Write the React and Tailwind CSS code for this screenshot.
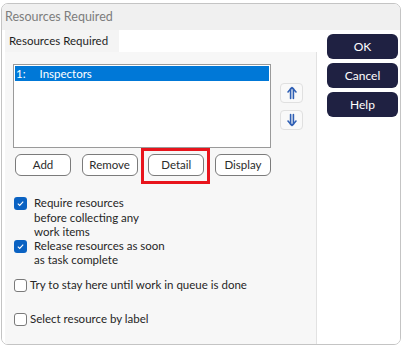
import React from 'react';

function ArrowIcon({ down }) {
  return (
    <svg width="12" height="14" viewBox="0 0 12 14" fill="none" stroke="#2f5fb4" strokeWidth="1.6" strokeLinecap="round" strokeLinejoin="round">
      {down ? (
        <>
          <path d="M2 8 L6 12.5 L10 8" />
          <path d="M4.6 1.5 V11.5 M7.4 1.5 V11.5" />
        </>
      ) : (
        <>
          <path d="M2 6 L6 1.5 L10 6" />
          <path d="M4.6 2.5 V12.5 M7.4 2.5 V12.5" />
        </>
      )}
    </svg>
  );
}

function Check({ checked, children, gap = 'gap-[6px]' }) {
  return (
    <div className={`flex items-start ${gap}`}>
      {checked ? (
        <div className="mt-[1px] w-[13px] h-[13px] shrink-0 rounded-[3px] bg-[#0a62c2] flex items-center justify-center">
          <svg width="9" height="9" viewBox="0 0 9 9" fill="none" stroke="white" strokeWidth="1.1">
            <path d="M1.8 4.6 L3.7 6.4 L7.2 2.6" />
          </svg>
        </div>
      ) : (
        <div className="mt-[1px] w-[13px] h-[13px] shrink-0 rounded-[3px] border border-[#7a7a7a] bg-white" />
      )}
      <div className="leading-[14.5px] whitespace-nowrap">{children}</div>
    </div>
  );
}

function Btn({ children }) {
  return (
    <button className="h-[22px] w-[56px] rounded-[6px] border border-[#7b7b7b] bg-white text-[11.5px] text-[#2b2b2b]">
      {children}
    </button>
  );
}

function SideBtn({ children }) {
  return (
    <button className="h-[25px] w-[71px] rounded-[6px] bg-[#1f2142] text-white text-[12px]">
      {children}
    </button>
  );
}

export default function App() {
  return (
    <div className="w-[403px] h-[346px] bg-white pt-[3px] pl-[1px]" style={{ fontFamily: 'Lato, "Open Sans", sans-serif' }}>
      <div className="w-[400px] h-[342px] border border-[#c4c4c4] rounded-[7px] overflow-hidden flex flex-col">
        {/* title bar */}
        <div className="h-[26px] bg-[#f0f0f0] px-[3px] flex items-center text-[12.5px] text-[#7d7d7d] whitespace-nowrap">
          Resources Required
        </div>

        <div className="flex-1 flex bg-white">
          {/* left: tab + panel */}
          <div className="w-[315px] pl-[3px] flex flex-col">
            <div className="h-[22px] flex">
              <div className="w-[114px] bg-[#f4f4f4] pl-[4px] flex items-center text-[11.5px] text-[#1e1e1e] whitespace-nowrap">
                Resources Required
              </div>
            </div>
            <div className="flex-1 bg-[#f7f7f7] border-r border-[#e2e2e2] pl-[8px] pt-[12px] relative">
              <div className="flex">
                <div className="w-[258px] h-[84px] border border-[#9a9a9a] bg-white p-[1px]">
                  <div className="h-[15px] bg-[#0078d7] text-white text-[11.5px] leading-[15px] pl-[1px]">
                    1:<span className="ml-[14px]">Inspectors</span>
                  </div>
                </div>
                <div className="ml-[9px] pt-[19px] flex flex-col gap-[7px]">
                  <button className="w-[23px] h-[20px] rounded-[4px] border border-[#e0e0e0] bg-[#f9f9f9] flex items-center justify-center">
                    <ArrowIcon />
                  </button>
                  <button className="w-[23px] h-[20px] rounded-[4px] border border-[#e0e0e0] bg-[#f9f9f9] flex items-center justify-center">
                    <ArrowIcon down />
                  </button>
                </div>
              </div>

              <div className="mt-[6px] ml-[2px] flex gap-[9px] w-[256px] justify-between">
                <Btn>Add</Btn>
                <Btn>Remove</Btn>
                <Btn>Detail</Btn>
                <Btn>Display</Btn>
              </div>

              {/* highlight box */}
              <div className="absolute left-[136px] top-[96px] w-[69px] h-[36px] border-[3px] border-[#e8141c]" />

              <div className="mt-[20px] ml-[1px] text-[11.5px] text-[#262626] flex flex-col">
                <Check checked gap="gap-[7px]">
                  Require resources<br />before collecting any<br />work items
                </Check>
                <div className="mt-[-1px]">
                  <Check checked gap="gap-[7px]">
                    Release resources as soon<br />as task complete
                  </Check>
                </div>
                <div className="mt-[10px]">
                  <Check gap="gap-[3px]">Try to stay here until work in queue is done</Check>
                </div>
                <div className="mt-[20px]">
                  <Check gap="gap-[3px]">Select resource by label</Check>
                </div>
              </div>
            </div>
          </div>

          {/* right: action buttons */}
          <div className="flex-1 pl-[10px] pt-[4px] flex flex-col gap-[4px]">
            <SideBtn>OK</SideBtn>
            <SideBtn>Cancel</SideBtn>
            <SideBtn>Help</SideBtn>
          </div>
        </div>
      </div>
    </div>
  );
}
